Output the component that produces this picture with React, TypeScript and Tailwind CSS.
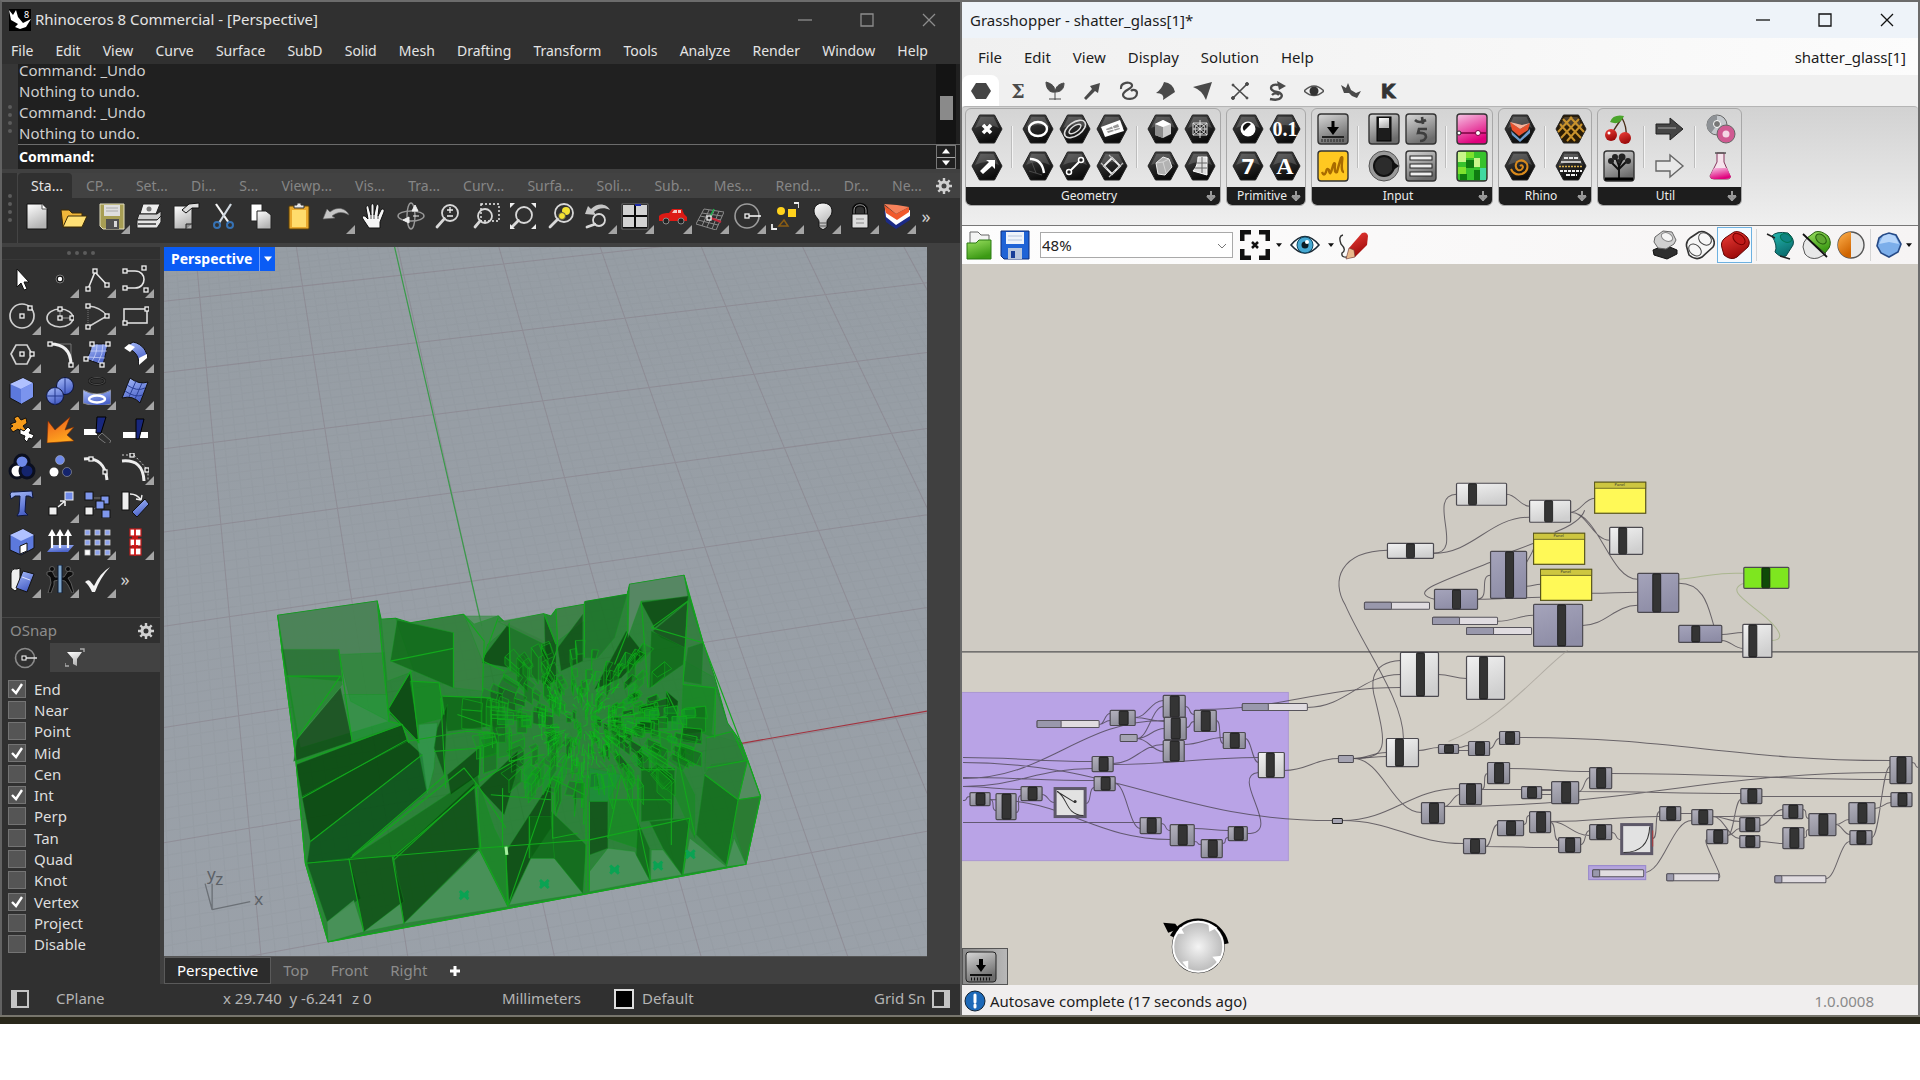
import type { ReactNode } from "react";

interface IconProps {
  label: string;
  fly?: boolean;
  children: ReactNode;
}

interface NodeSpec {
  x: number;
  y: number;
  w: number;
  h: number;
  bar: number;
  barW?: number;
  tone?: "light" | "dim" | "green";
}

const MENU = ["File", "Edit", "View", "Curve", "Surface", "SubD", "Solid", "Mesh", "Drafting", "Transform", "Tools", "Analyze", "Render", "Window", "Help"];
const TABS = ["CP...", "Set...", "Di...", "S...", "Viewp...", "Vis...", "Tra...", "Curv...", "Surfa...", "Soli...", "Sub...", "Mes...", "Rend...", "Dr...", "Ne..."];
const SNAPS: [string, boolean][] = [
  ["End", true], ["Near", false], ["Point", false], ["Mid", true], ["Cen", false], ["Int", true], ["Perp", false],
  ["Tan", false], ["Quad", false], ["Knot", false], ["Vertex", true], ["Project", false], ["Disable", false],
];

/* ---------- shared gradients ---------- */

function SharedDefs() {
  const grads: [string, string, string][] = [
    ["gBlue", "#a9bdfa", "#4a62c8"],
    ["gGray", "#ffffff", "#b4b4b4"],
    ["gDark", "#4a4a4a", "#0c0c0c"],
    ["gPlate", "#d8d8d8", "#6c6c6c"],
    ["gFire", "#e8571c", "#ffa61e"],
    ["gPink", "#f6c4e4", "#e0007c"],
    ["gLight", "#f2f2f2", "#cfcfcf"],
    ["gDim", "#b3b1bd", "#8f8f9b"],
    ["gPurple", "#a5a4bb", "#8e8da6"],
    ["gRed", "#f0403a", "#9c0a0a"],
    ["gTeal", "#25b8b0", "#0b6f70"],
    ["gOrange", "#ffb14d", "#cf6400"],
    ["gGreen", "#9be060", "#3c9a14"],
  ];
  return (
    <svg className="absolute size-0" aria-hidden="true">
      <defs>
        {grads.map(([id, a, b]) => (
          <linearGradient key={id} id={id} x1="0" y1="0" x2="0.4" y2="1">
            <stop offset="0" stopColor={a} />
            <stop offset="1" stopColor={b} />
          </linearGradient>
        ))}
        <radialGradient id="gKnob">
          <stop offset="0" stopColor="#f4f4f4" />
          <stop offset="1" stopColor="#b9b9b9" />
        </radialGradient>
        <linearGradient id="gGround" x1="0" y1="0" x2="0" y2="1">
          <stop offset="0" stopColor="#969da4" />
          <stop offset="1" stopColor="#9fa5ae" />
        </linearGradient>
      </defs>
    </svg>
  );
}

/* ---------- Rhino toolbars ---------- */

function Tool({ label, fly, children }: IconProps) {
  return (
    <button aria-label={label} className="relative flex min-w-0 flex-1 items-center justify-center">
      <svg viewBox="0 0 28 28" className="size-7 shrink-0" fill="none">
        {children}
      </svg>
      {fly && (
        <svg viewBox="0 0 8 8" className="absolute right-0 bottom-0 size-[9px]">
          <path d="M8 0V8H0Z" fill="#a4a4a4" />
        </svg>
      )}
    </button>
  );
}

const H = ({ x, y }: { x: number; y: number }) => (
  <rect x={x - 2} y={y - 2} width="4" height="4" fill="#2b2b2b" stroke="#f0f0f0" strokeWidth="1.3" />
);

const Lens = ({ cx = 16, cy = 11, r = 8 }) => (
  <g stroke="#d8d8d8">
    <circle cx={cx} cy={cy} r={r} strokeWidth="1.8" />
    <path d={`M${cx - r * 0.7} ${cy + r * 0.7}L3 25`} strokeWidth="2.8" strokeLinecap="round" />
  </g>
);

function MainToolbar() {
  return (
    <div className="flex min-w-0 flex-1">
      <Tool label="New">
        <path d="M4 2H19L24 7V27H4Z" fill="url(#gGray)" stroke="#111" />
        <path d="M19 2V7H24" stroke="#555" fill="#fff" />
      </Tool>
      <Tool label="Open">
        <path d="M1 8H9L12 11H22V25H3Z" fill="#f0b73a" stroke="#3a2a08" />
        <path d="M8 14H27L22 25H3Z" fill="#ffe075" stroke="#3a2a08" />
      </Tool>
      <Tool label="Save" fly>
        <path d="M2 2H26V27H5L2 24Z" fill="#a79e54" stroke="#e3dfc0" />
        <rect x="6" y="3" width="16" height="11" fill="#dedede" />
        <path d="M8 6H20M8 9H20" stroke="#aaa" />
        <rect x="8" y="17" width="13" height="10" fill="#505050" />
        <rect x="16" y="19" width="3" height="6" fill="#d8d8d8" />
      </Tool>
      <Tool label="Print">
        <path d="M8 2H25L21 12H5Z" fill="#eee" stroke="#222" />
        <path d="M4 12H22L26 9V14L22 18H2Z" fill="#cfcfcf" stroke="#222" />
        <path d="M2 18H22L26 14V20L22 26H2Z" fill="#e6e6e6" stroke="#222" />
        <path d="M3 22H21" stroke="#333" strokeWidth="1.5" />
        <circle cx="14" cy="7" r="2.5" fill="#777" />
      </Tool>
      <Tool label="Properties">
        <path d="M2 4H20V27H2Z" fill="url(#gGray)" stroke="#222" />
        <path d="M10 8L17 2L27 1V6H20L14 11Z" fill="#dcdcdc" stroke="#111" />
        <path d="M14 27V22H20" fill="#888" stroke="#222" />
      </Tool>
      <Tool label="Cut">
        <path d="M6 2L19 21" stroke="#f5f5f5" strokeWidth="2.2" />
        <path d="M21 2L9 21" stroke="#d0d8e0" strokeWidth="2.2" />
        <circle cx="7" cy="23" r="3" stroke="#3672b4" strokeWidth="2" />
        <circle cx="20" cy="23" r="3" stroke="#3672b4" strokeWidth="2" />
      </Tool>
      <Tool label="Copy">
        <path d="M4 2H15V19H4Z" fill="#fff" stroke="#222" />
        <path d="M10 9H19L24 13V27H10Z" fill="url(#gGray)" stroke="#222" />
      </Tool>
      <Tool label="Paste">
        <rect x="4" y="4" width="20" height="23" rx="1" fill="#e9a92d" stroke="#5c4007" />
        <rect x="7" y="8" width="14" height="17" fill="#ffdc6c" />
        <path d="M9 6V3H12V1H16V3H19V6Z" fill="#e8e8e8" stroke="#333" />
      </Tool>
      <Tool label="Undo" fly>
        <path d="M1 17L5 7L8 10C15 4 24 6 27 13C20 9 15 10 10 14L13 16Z" fill="#c6c6c6" stroke="#666" strokeWidth=".6" />
      </Tool>
      <Tool label="Pan">
        <path d="M9 26L3 17C1 14 4 13 6 15L8 17L6 6C6 3 9 3 9 6L11 13V4C11 1 14 1 14 4V13L16 4C17 1 19 2 19 5L18 14L21 8C22 6 25 7 24 10L20 20V26Z" fill="#f6f6f6" stroke="#111" />
        <path d="M11 13V17M14 13V17M18 14V17" stroke="#555" />
      </Tool>
      <Tool label="Rotate view">
        <ellipse cx="14" cy="14" rx="13" ry="5" stroke="#999" strokeWidth="1.4" />
        <ellipse cx="14" cy="14" rx="4" ry="13" stroke="#999" strokeWidth="1.4" />
        <path d="M6 18L12 15V21ZM18 3L21 9H15ZM16 14H22" fill="#eee" stroke="#eee" />
      </Tool>
      <Tool label="Zoom dynamic">
        <Lens />
        <path d="M13 8H19M16 5V11M13 14H19" stroke="#eee" strokeWidth="1.3" />
      </Tool>
      <Tool label="Zoom window">
        <rect x="9" y="2" width="18" height="17" stroke="#eee" strokeWidth="1.4" strokeDasharray="2 2" />
        <Lens cx={13} cy={14} r={7} />
      </Tool>
      <Tool label="Zoom extents">
        <Lens cx={15} cy={13} r={8} />
        <path d="M1 1H6L1 6ZM27 1V6L22 1ZM27 27H22L27 22ZM1 27V22L6 27Z" fill="#eee" />
      </Tool>
      <Tool label="Zoom selected">
        <Lens cx={17} cy={11} r={9} />
        <circle cx="19" cy="9" r="4" fill="#f3e233" />
        <circle cx="15" cy="14" r="3.5" fill="#f3e233" stroke="#554" />
      </Tool>
      <Tool label="Undo view" fly>
        <path d="M1 12L4 4L7 7C14 0 23 2 26 8C20 5 14 6 10 10L12 13Z" fill="#c6c6c6" />
        <Lens cx={15} cy={18} r={6} />
      </Tool>
      <Tool label="Four viewports" fly>
        <rect x="1" y="2" width="26" height="25" fill="#0a0a0a" stroke="#aaa" strokeWidth=".5" />
        <path d="M2 3H13V13H2ZM15 3H26V13H15ZM2 15H13V25H2ZM15 15H26V25H15Z" fill="#d2d2d2" />
        <path d="M14 2V4H20V2Z" fill="#1b2aa8" />
      </Tool>
      <Tool label="Car" fly>
        <path d="M0 14C3 11 7 11 10 11L13 7H23L25 12L28 15V19H0Z" fill="#dd1a14" />
        <path d="M13 11L15 8H18V11ZM19 8H22V11H19Z" fill="#f5c8c4" />
        <circle cx="7" cy="19" r="3" fill="#222" stroke="#888" />
        <circle cx="22" cy="19" r="3" fill="#222" stroke="#888" />
      </Tool>
      <Tool label="Set CPlane" fly>
        <path d="M8 7L28 10L20 28L0 22ZM4 14L25 18M6 11L26 14M2 18L22 23M13 8L6 24M18 9L11 25M23 9L16 27" stroke="#8b8b8b" />
        <path d="M14 15L18 7" stroke="#1fae4b" strokeWidth="1.6" />
        <path d="M15 16L25 20" stroke="#c4283a" strokeWidth="2" />
        <H x={13} y={16} />
      </Tool>
      <Tool label="Circle" fly>
        <circle cx="13" cy="14" r="12" stroke="#9c9c9c" strokeWidth="1.6" />
        <path d="M13 14H27" stroke="#fff" strokeWidth="1.5" />
        <H x={13} y={14} />
      </Tool>
      <Tool label="Select" fly>
        <circle cx="10" cy="9" r="4" fill="#ffd21c" />
        <rect x="17" y="7" width="8" height="8" fill="#ffd21c" />
        <path d="M13 18L17 24H8Z" stroke="#8a5d14" strokeWidth="1.5" />
        <path d="M23 1H28V6M1 22V27H6" stroke="#eee" strokeWidth="1.8" />
      </Tool>
      <Tool label="Hide" fly>
        <path d="M10 20C10 16 5 15 5 9C5 4 9 1 14 1C19 1 23 4 23 9C23 15 18 16 18 20V25L14 28L10 25Z" fill="url(#gGray)" stroke="#111" />
        <path d="M10 21H18M10 24H18" stroke="#555" />
      </Tool>
      <Tool label="Lock" fly>
        <path d="M8 13V8C8 1 20 1 20 8V13" stroke="#0a0a0a" strokeWidth="4" />
        <path d="M8 13V8C8 1 20 1 20 8V13" stroke="#999" strokeWidth="1" />
        <rect x="6" y="12" width="16" height="14" rx="1" fill="#dcdcdc" stroke="#111" />
        <path d="M10 17H18M10 21H18" stroke="#888" />
      </Tool>
      <Tool label="Layers" fly>
        <path d="M1 9L13 17L27 10V18L13 27L3 20Z" fill="#1b2a86" />
        <path d="M2 6L13 15L27 8V14L13 23L3 15Z" fill="#fff" />
        <path d="M1 3L13 12L26 5V10L14 18L3 11Z" fill="#f1592c" />
        <path d="M1 2L14 3L26 5L13 12Z" fill="#f7825b" />
      </Tool>
    </div>
  );
}

function SideTools() {
  return (
    <div className="ml-px grid h-[338px] w-[151px] grid-cols-4 grid-rows-9">
      <Tool label="Pointer"><path d="M9 4V22L13 18L16 25L19 24L16 17H21Z" fill="#fff" stroke="#111" /></Tool>
      <Tool label="Point" fly><circle cx="14" cy="14" r="4" fill="#111" stroke="#777" /><circle cx="14" cy="14" r="2.2" fill="#fff" /></Tool>
      <Tool label="Polyline" fly>
        <path d="M5 24L12 7L24 20" stroke="#e6e6e6" strokeWidth="1.6" /><H x={5} y={24} /><H x={12} y={6} /><H x={24} y={20} />
      </Tool>
      <Tool label="Curve" fly>
        <path d="M4 6H14C26 6 26 23 14 23H4" stroke="#e6e6e6" strokeWidth="1.6" /><H x={4} y={6} /><H x={4} y={23} /><H x={23} y={3} /><H x={25} y={25} />
      </Tool>
      <Tool label="Circle tool" fly>
        <circle cx="14" cy="14" r="12" stroke="#cfcfcf" strokeWidth="1.7" /><H x={14} y={14} /><H x={22} y={6} />
      </Tool>
      <Tool label="Ellipse" fly>
        <ellipse cx="14" cy="16" rx="13" ry="9" stroke="#cfcfcf" strokeWidth="1.7" /><path d="M14 7V16H26" stroke="#999" /><H x={14} y={16} /><H x={14} y={7} /><H x={26} y={16} />
      </Tool>
      <Tool label="Arc" fly>
        <path d="M5 4Q18 5 24 14L5 25" stroke="#cfcfcf" strokeWidth="1.5" /><path d="M5 4V25" stroke="#777" strokeDasharray="1 1" /><H x={5} y={4} /><H x={5} y={25} /><H x={24} y={14} />
      </Tool>
      <Tool label="Rectangle" fly>
        <rect x="3" y="7" width="23" height="14" stroke="#dcdcdc" strokeWidth="1.6" /><H x={26} y={7} /><H x={4} y={21} />
      </Tool>
      <Tool label="Polygon" fly>
        <path d="M3 14L8 5H19L24 14L19 24H8Z" stroke="#cfcfcf" strokeWidth="1.7" /><H x={14} y={14} /><H x={24} y={14} />
      </Tool>
      <Tool label="Fillet" fly>
        <path d="M3 4H25V25" stroke="#777" /><path d="M4 4C18 4 25 11 25 25" stroke="#f0f0f0" strokeWidth="3" /><H x={4} y={4} /><H x={25} y={25} />
      </Tool>
      <Tool label="Surface" fly>
        <path d="M8 4H25L20 25L3 19Q9 11 8 4Z" fill="url(#gBlue)" stroke="#111" /><path d="M14 4Q14 14 9 21M20 4Q20 14 15 23M7 11H24M5 17L22 18" stroke="#dfe5ff" strokeWidth=".6" /><H x={9} y={4} /><H x={25} y={4} /><H x={3} y={19} /><H x={19} y={25} />
      </Tool>
      <Tool label="Extrude" fly>
        <path d="M3 8L12 2C22 4 26 12 26 17L18 25C18 15 13 9 3 8Z" fill="url(#gBlue)" stroke="#111" /><path d="M3 8L8 4L14 7L9 12ZM18 25L18 18L26 14V18Z" fill="#fff" />
      </Tool>
      <Tool label="Box" fly>
        <path d="M2 7L15 1L25 6V20L13 27L2 21Z" fill="#5c79dc" stroke="#111" /><path d="M2 7L15 1L25 6L13 12Z" fill="#b0c1ff" /><path d="M13 12L25 6V20L13 27Z" fill="#7b94ee" />
      </Tool>
      <Tool label="Boolean union" fly>
        <circle cx="19" cy="9" r="8.5" fill="url(#gBlue)" stroke="#0a123c" /><circle cx="9" cy="19" r="8.5" fill="url(#gBlue)" stroke="#0a123c" /><path d="M9 10V28M0 19H18M19 1V17" stroke="#24398e" />
      </Tool>
      <Tool label="Project curve" fly>
        <ellipse cx="14" cy="4" rx="8" ry="3.5" stroke="#111" strokeWidth="2" /><ellipse cx="14" cy="4" rx="8" ry="3.5" stroke="#888" strokeWidth=".5" /><path d="M0 13Q14 21 28 13V27Q14 31 0 26Z" fill="url(#gBlue)" stroke="#888" /><ellipse cx="14" cy="22" rx="8" ry="3.5" stroke="#fff" strokeWidth="2.5" />
      </Tool>
      <Tool label="Patch" fly>
        <path d="M9 1Q18 8 27 5L19 26Q12 18 1 21Z" fill="url(#gBlue)" stroke="#111" /><path d="M6 8Q16 15 24 11M4 14Q14 21 22 18M15 4L8 20M21 6L14 22" stroke="#2a3f94" />
      </Tool>
      <Tool label="Puzzle" fly>
        <path d="M2 9L8 7L6 3L10 1L13 5L18 3L19 8L15 11L18 15L13 17L10 14L5 17L2 13L5 11Z" fill="#f59b1b" stroke="#111" />
        <path d="M12 14L16 16L20 12L23 15L21 18L26 20L24 24L21 23L19 27L16 24L17 21L12 19Z" fill="#fff" stroke="#111" />
      </Tool>
      <Tool label="Explode"><path d="M1 28L2 6L9 15L24 2L19 15L28 12L21 20L28 26Z" fill="url(#gFire)" stroke="#7c2c04" strokeWidth=".6" /></Tool>
      <Tool label="Trim"><path d="M1 14H14V20H1Z" fill="#fff" /><path d="M14 2H23L18 18H13Z" fill="#18277d" stroke="#000" /><path d="M15 22L19 18L28 26L25 30L17 24Z" stroke="#777" /></Tool>
      <Tool label="Split"><path d="M2 17H27V23H2Z" fill="#fff" /><path d="M15 4H23L18 24H15Z" fill="#18277d" stroke="#000" /></Tool>
      <Tool label="Group" fly>
        <circle cx="14" cy="9" r="7" fill="#6f8ae8" stroke="#0b0f1e" strokeWidth="3" /><circle cx="9" cy="18" r="7" fill="#fff" stroke="#0b0f1e" strokeWidth="3" /><circle cx="19" cy="18" r="7" fill="#14246c" stroke="#0b0f1e" strokeWidth="3" /><circle cx="14" cy="9" r="5" fill="#6f8ae8" />
      </Tool>
      <Tool label="Ungroup">
        <circle cx="14" cy="7" r="4.5" fill="#6f8ae8" stroke="#bbb" strokeWidth=".5" /><circle cx="8" cy="19" r="4.5" fill="#fff" /><circle cx="21" cy="19" r="4.5" fill="#14246c" stroke="#bbb" strokeWidth=".5" />
      </Tool>
      <Tool label="Edit points"><path d="M1 6Q22 4 24 27" stroke="#eee" strokeWidth="3" /><H x={8} y={6} /><H x={22} y={19} /></Tool>
      <Tool label="Control points" fly><path d="M1 8Q22 6 23 28" stroke="#eee" strokeWidth="3" /><path d="M1 2H13L27 17V27" stroke="#ccc" strokeDasharray="2 2" /><H x={11} y={2} /><H x={26} y={17} /></Tool>
      <Tool label="Text"><path d="M2 4Q3 1 6 2L24 1L25 8L21 6H18L17 22L20 25L9 26L11 22L12 6H7L3 9Z" fill="url(#gBlue)" stroke="#0d1740" /></Tool>
      <Tool label="Move" fly>
        <path d="M12 17L19 11M19 11H14M19 11V16" stroke="#eee" strokeWidth="1.6" /><rect x="3" y="17" width="8" height="8" fill="#eee" stroke="#111" /><rect x="19" y="2" width="8" height="8" fill="#6f8ae8" stroke="#eee" />
      </Tool>
      <Tool label="Copy objects">
        <path d="M11 8L20 8M11 19L19 14" stroke="#777" /><g fill="#7f97ec" stroke="#111"><rect x="2" y="2" width="8" height="8" /><rect x="18" y="6" width="8" height="8" /><rect x="13" y="11" width="8" height="8" /><rect x="19" y="20" width="8" height="8" /></g><rect x="2" y="17" width="8" height="8" fill="#eee" stroke="#111" />
      </Tool>
      <Tool label="Rotate"><rect x="1" y="2" width="7" height="18" fill="#eee" stroke="#111" /><path d="M9 4Q16 4 20 10M20 10L15 9M20 10L21 5" stroke="#eee" strokeWidth="1.4" /><path d="M11 22L24 9L28 14L16 27Z" fill="url(#gBlue)" stroke="#111" /></Tool>
      <Tool label="Solid edit" fly>
        <path d="M2 7L15 1L26 7V20L13 27L2 22Z" fill="#5c79dc" stroke="#111" /><path d="M2 7L15 1L26 7L13 13Z" fill="#b0c1ff" /><path d="M12 18L19 15V23L12 26Z" fill="#fff" stroke="#111" />
      </Tool>
      <Tool label="Extrude up" fly>
        <path d="M7 17H28L22 24H1Z" fill="url(#gBlue)" /><path d="M6 20V5M14 20V5M22 20V5" stroke="#fff" strokeWidth="2.2" /><path d="M6 1L10 8H2ZM14 1L18 8H10ZM22 1L26 8H18Z" fill="#fff" />
      </Tool>
      <Tool label="Array" fly>
        {[2, 12, 22].map((y) => [2, 12, 22].map((x) => (
          <rect key={`${x}-${y}`} x={x} y={y} width="5" height="5" fill={y === 22 && x === 2 ? "#fff" : "#8ea3ee"} stroke="#ccc" strokeWidth=".8" />
        )))}
      </Tool>
      <Tool label="Flow" fly>
        {[1, 11, 20].map((y) => <rect key={y} x="9" y={y} width="11" height="7" fill="#fff" stroke="#c71b1b" strokeWidth="1.2" />)}
        <path d="M14 1V28M12 8V11M16 8V11M12 17V20M16 17V20" stroke="#d01414" strokeWidth="1.8" />
      </Tool>
      <Tool label="Books" fly>
        <path d="M3 8Q4 3 9 4L12 3V22L7 26L3 23Z" fill="#eee" stroke="#111" /><path d="M15 6L26 9L19 27L8 23Z" fill="url(#gBlue)" stroke="#111" /><path d="M14 12L22 15" stroke="#dfe5ff" />
      </Tool>
      <Tool label="Mirror people" fly>
        <g fill="#0c0c0c" stroke="#6a6a6a" strokeWidth=".8">
          <path d="M1 7L6 6L9 12H13V15L8 16V20L5 28H2L5 18L4 12L1 10ZM27 7L22 6L18 12H14V15L19 16L22 20L26 28H28L25 18L22 13L27 10Z" />
          <circle cx="6" cy="4" r="2.5" />
          <circle cx="22" cy="4" r="2.5" />
        </g>
        <rect x="12" y="0" width="4" height="28" fill="#7fa6cc" stroke="#0d1a33" />
      </Tool>
      <Tool label="Check" fly><path d="M2 17Q5 14 7 16L11 21Q17 8 27 2Q17 13 12 27H9Q6 20 2 17Z" fill="#f2f2f2" /></Tool>
      <button aria-label="More tools" className="pr-5 text-lg leading-none text-[#d0d0d0]">»</button>
    </div>
  );
}

const Gear = () => (
  <svg viewBox="0 0 16 16" className="size-4" fill="none">
    <circle cx="8" cy="8" r="4" stroke="#d0d0d0" strokeWidth="3" />
    <path d="M8 0V3M8 13V16M0 8H3M13 8H16M2.3 2.3L4.5 4.5M11.5 11.5L13.7 13.7M2.3 13.7L4.5 11.5M11.5 4.5L13.7 2.3" stroke="#d0d0d0" strokeWidth="2.4" />
  </svg>
);

const GripDots = ({ vertical }: { vertical?: boolean }) => (
  <div className={vertical ? "flex flex-col gap-1" : "flex gap-1"}>
    {[0, 1, 2, 3].map((i) => (
      <span key={i} className="size-1 rounded-full bg-[#5c5c5c]" />
    ))}
  </div>
);

function WindowButtons({ dark }: { dark?: boolean }) {
  const stroke = dark ? "#8d8d8d" : "#111";
  const shapes: [string, string][] = [
    ["Minimize", "M0 7H14"],
    ["Maximize", "M1 1H13V13H1Z"],
    ["Close", "M1 1L13 13M13 1L1 13"],
  ];
  return (
    <div className="ml-auto flex gap-12 pr-6">
      {shapes.map(([label, d]) => (
        <button key={label} aria-label={label}>
          <svg viewBox="0 0 14 14" className="size-3.5"><path d={d} fill="none" stroke={stroke} strokeWidth="1.3" /></svg>
        </button>
      ))}
    </div>
  );
}

/* ---------- Rhino viewport ---------- */

const ROWS = [180, 240, 301, 372, 448, 531, 625, 726, 841, 970, 1110];

function GroundGrid() {
  const major: string[] = [];
  const minor: string[] = [];
  const row = (y: number) => {
    const s = 0.076 + 0.000112 * y;
    return `M160 ${y + s * 5}L930 ${y - s * 765}`;
  };
  const col = (k: number) => {
    const x = 397 + 101 * k;
    return `M${x} 247L${x + (0.221 + 0.064 * k) * 712} 959`;
  };
  ROWS.forEach((y, i) => {
    major.push(row(y));
    const next = ROWS[i + 1];
    if (next) for (let j = 1; j < 10; j++) minor.push(row(y + ((next - y) * j) / 10));
  });
  for (let k = -4; k <= 6; k++) {
    major.push(col(k));
    for (let j = 1; j < 10; j++) minor.push(col(k + j / 10));
  }
  return (
    <>
      <path d={minor.join("")} stroke="#868c94" strokeOpacity=".17" fill="none" />
      <path d={major.join("")} stroke="#847a84" strokeOpacity=".48" fill="none" />
    </>
  );
}

const D = "#07400c";
const M = "#0c6614";
const G = "#128a1e";
const L = "#4f9560";

const SHARDS: [string, string, number][] = [
  ["52,163 350,120 385,480 120,560", "#5c8468", 0.75],
  ["62,265 235,265 245,360 80,345", M, 0.5],
  ["235,280 372,275 385,480 270,420", G, 0.45],
  ["80,345 240,345 245,370 110,530", G, 0.6],
  ["240,380 275,540 100,600 110,535", D, 0.75],
  ["250,400 380,400 385,480 420,490 275,540", "#18a336", 0.45],
  ["362,175 405,172 460,330 380,360", "#3c8a48", 0.7],
  ["410,178 578,215 578,380 390,300", M, 0.8],
  ["450,185 608,160 670,240 665,390 580,380 578,215", "#3f8148", 0.7],
  ["385,440 448,335 475,545 390,460", D, 0.9],
  ["448,360 535,365 550,470 470,490", G, 0.8],
  ["545,405 690,410 690,495 560,510", M, 0.9],
  ["612,165 712,165 740,200 680,250 665,300", "#3e8a49", 0.8],
  ["670,285 745,185 745,320 665,305", D, 0.8],
  ["745,190 850,240 850,360 750,330", "#1c7226", 0.8],
  ["712,182 848,158 880,240 850,250", "#47824f", 0.7],
  ["850,165 885,250 885,360 855,370", D, 0.7],
  ["885,145 970,130 970,180 890,240", "#4b8253", 0.7],
  ["890,260 965,160 965,300 900,330", D, 0.7],
  ["970,122 1098,100 1060,230 1010,290 970,290", "#1c7028", 0.7],
  ["1000,385 1095,210 1150,280 1080,350", D, 0.8],
  ["1105,70 1268,43 1280,110 1140,120 1100,230", "#688a74", 0.8],
  ["1140,125 1280,105 1280,120 1180,200", D, 0.8],
  ["1175,210 1278,125 1270,260 1200,230", "#16501c", 0.9],
  ["1170,210 1270,260 1265,310 1165,380", M, 0.8],
  ["1280,110 1325,245 1360,350 1270,300", "#3d7d49", 0.7],
  ["1280,260 1325,245 1320,370 1265,360", "#187224", 0.8],
  ["1265,370 1362,380 1360,530 1260,490", G, 0.7],
  ["1362,380 1398,485 1440,545 1350,520", "#3d8549", 0.6],
  ["1215,390 1250,420 1245,480 1215,480", D, 0.9],
  ["107,610 425,490 440,540 125,705", D, 0.85],
  ["125,705 440,540 485,580 150,840", D, 0.9],
  ["150,840 485,580 500,690 270,890 140,905", "#0a4a18", 0.85],
  ["270,890 650,640 655,670 400,885", M, 0.7],
  ["400,885 640,665 655,860 430,1085", D, 0.75],
  ["140,905 265,890 300,1010 200,1080", "#0d4f1a", 0.8],
  ["265,890 395,885 430,1020 310,1110", D, 0.7],
  ["200,1080 280,1015 310,1110 203,1140", L, 0.9],
  ["310,1110 420,1025 430,1085", L, 0.9],
  ["430,1085 655,865 740,1035", L, 0.9],
  ["655,670 700,800 735,870 740,1030 655,865", G, 0.6],
  ["560,640 655,560 655,640 570,700", D, 0.8],
  ["655,680 770,570 765,640 730,760", D, 0.8],
  ["735,870 870,660 870,800 810,890 745,1025", D, 0.8],
  ["810,890 880,890 965,995 745,1030", L, 0.95],
  ["870,750 975,850 965,995 880,890", M, 0.8],
  ["805,765 870,765 880,890 810,890", M, 0.8],
  ["985,930 1040,860 1120,870 1165,955 985,990", L, 0.95],
  ["985,720 1040,720 1040,860 985,880", D, 0.7],
  ["1045,715 1135,715 1130,860 1040,830", G, 0.7],
  ["1130,780 1165,860 1165,955 1125,880", M, 0.8],
  ["1170,865 1205,865 1262,940 1168,955", L, 0.9],
  ["1165,780 1285,770 1262,940 1205,860", M, 0.8],
  ["1285,830 1395,915 1265,938", L, 0.95],
  ["1140,620 1240,620 1235,770 1140,780", M, 0.8],
  ["1250,600 1300,700 1300,830 1240,700", G, 0.6],
  ["1335,530 1410,510 1450,595 1330,630", "#2f7d3b", 0.7],
  ["1330,640 1430,715 1395,910 1305,820", M, 0.7],
  ["1350,610 1458,597 1430,715 1330,640", "#2a7a36", 0.7],
  ["1458,597 1497,705 1430,715", "#5f8f6a", 0.9],
  ["1430,715 1497,705 1453,908 1418,800 1395,915", "#2b7a30", 0.8],
  ["1418,830 1453,908 1395,915", L, 0.9],
  ["475,490 530,485 520,620 500,700 470,550", "#37a458", 0.6],
  ["530,500 560,430 550,640 520,560", D, 0.7],
  ["985,620 1080,640 1040,720 985,720", "#12983a", 0.6],
];

const EDGES = [
  "52,163 105,580 135,905 203,1140 1453,908 1497,705 1458,595 1325,245 1268,43",
  "350,120 385,480 425,490 445,545",
  "235,265 275,540", "80,345 240,345 108,535", "107,605 425,490", "125,710 440,535", "150,840 485,580",
  "135,905 655,860 985,835 1285,770", "265,890 310,1110", "395,885 430,1085", "655,860 740,1030",
  "270,890 610,620 650,670 400,885", "275,882 555,640", "400,895 640,675", "645,665 660,860",
  "735,870 740,1035 870,660", "805,765 805,890", "875,700 875,830 950,815", "975,700 975,990", "985,720 985,985",
  "1045,715 1230,715 1230,850", "1130,640 1130,780 1168,955", "1285,770 1265,938", "1430,715 1395,912",
  "1250,590 1300,820", "1100,90 1100,210 1060,310", "1140,120 1160,380", "1170,200 1280,120 1265,370",
  "970,125 970,290", "885,145 890,260 850,370", "850,160 885,250", "745,185 748,330", "712,170 665,300 730,330",
  "608,160 670,240 665,390", "578,215 578,380", "390,300 578,262", "385,440 450,330 475,545 385,450",
  "450,360 535,365 550,460", "545,405 690,410 695,560", "690,460 815,465", "590,460 690,495",
  "440,540 620,510 730,520", "520,570 660,560 655,650", "655,660 830,560", "1265,370 1362,380 1360,530",
  "1215,390 1265,495 1250,590", "1335,530 1415,510 1450,595", "1170,200 1325,245", "1330,640 1430,715 1497,705",
  "1335,620 1458,597 1430,715", "1140,560 1240,625 1135,625", "1080,640 1130,780", "1080,640 1040,830", "540,410 555,680",
  "745,500 745,600 850,580", "690,700 870,715", "725,680 725,860", "650,670 735,800", "870,650 970,700",
];

// small congruential generator keeps the shards the same on every paint
function makeRandom(start: number) {
  let seed = start;
  return () => {
    seed = (seed * 16807) % 2147483647;
    return seed / 2147483647;
  };
}

interface Prism {
  y: number;
  wall: string;
  top: string;
  fill: string;
}

// glass splinters: a slanted top face over a wall, smaller towards the impact point
function buildPrisms() {
  const rnd = makeRandom(41);
  const list: Prism[] = [];
  for (let i = 0; i < 210; i++) {
    const a = rnd() * Math.PI * 2;
    const r = 12 + Math.pow(rnd(), 0.85) * 250;
    const x = 975 + Math.cos(a) * r * 1.2;
    const y = 470 + Math.sin(a) * r * 0.8;
    const size = 9 + r * 0.17 * (0.5 + rnd());
    const drop = 14 + r * 0.3 * rnd();
    const dx = Math.cos(a) * size;
    const dy = Math.sin(a) * size * 0.8;
    const nx = -Math.sin(a) * size * 0.4;
    const ny = Math.cos(a) * size * 0.4;
    const p = (px: number, py: number) => `${Math.round(px)},${Math.round(py)}`;
    list.push({
      y,
      wall: [p(x, y), p(x + dx, y + dy), p(x + dx, y + dy + drop), p(x, y + drop)].join(" "),
      top: [p(x, y), p(x + dx, y + dy), p(x + dx + nx * 1.4, y + dy + ny * 1.4), p(x + nx, y + ny)].join(" "),
      fill: [D, M, G, "#129a2c"][Math.floor(rnd() * 4)],
    });
  }
  return list.sort((m, n) => m.y - n.y);
}

const PRISMS = buildPrisms();

function coreLines() {
  const rnd = makeRandom(7);
  let d = "";
  for (let i = 0; i < 120; i++) {
    const a = rnd() * Math.PI * 2;
    const r = Math.sqrt(rnd()) * 120;
    const x = 965 + Math.cos(a) * r * 1.1;
    const y = 490 + Math.sin(a) * r;
    const len = 16 + 24 * rnd();
    const t = rnd() < 0.4 ? Math.PI / 2 : a + rnd() - 0.5;
    d += `M${x.toFixed(0)} ${y.toFixed(0)}l${(Math.cos(t) * len).toFixed(0)} ${(Math.sin(t) * len).toFixed(0)}l${(rnd() * 24 - 12).toFixed(0)} ${(rnd() * 20 - 6).toFixed(0)}`;
  }
  return d;
}

function Model() {
  return (
    <g transform="translate(260 560) scale(.33333)" strokeLinejoin="round">
      <polygon
        points="52,163 350,120 362,175 405,172 450,185 608,160 640,190 712,165 730,182 848,158 870,165 885,145 970,130 972,122 1098,100 1105,70 1268,43 1280,90 1325,245 1360,350 1398,485 1440,545 1458,595 1497,705 1453,908 203,1140 135,905 105,580"
        fill="#0f7a1c"
        fillOpacity=".78"
        stroke="#0c9c18"
        strokeWidth="3"
      />
      {SHARDS.map(([points, fill, opacity]) => (
        <polygon key={points} points={points} fill={fill} fillOpacity={opacity * 0.88} stroke="#0f9a1a" strokeOpacity=".5" strokeWidth="2" />
      ))}
      {PRISMS.map((s, i) => (
        <g key={i} fill={s.fill} stroke="#0fae1b" strokeWidth="2.4" strokeOpacity=".8">
          <polygon points={s.wall} fillOpacity=".42" />
          <polygon points={s.top} fillOpacity=".2" />
        </g>
      ))}
      {EDGES.map((points) => (
        <polyline key={points} points={points} fill="none" stroke="#12a81c" strokeWidth="3.4" />
      ))}
      <path d={coreLines()} fill="none" stroke="#0cc01a" strokeWidth="2.6" strokeOpacity=".8" />
      <path d="M735 855L738 880" stroke="#a6f0a0" strokeWidth="9" />
      <g stroke="#0aa353" strokeWidth="9">
        {["610 1000", "850 967", "1060 924", "1190 912", "1287 878"].map((p) => (
          <path key={p} d={`M${p}m-13 -12l26 24m0 -24l-26 24m0 -12h26`} />
        ))}
      </g>
    </g>
  );
}

function Viewport() {
  return (
    <div className="relative min-h-0 flex-1">
      <svg viewBox="164 247 761 710" preserveAspectRatio="xMinYMin slice" className="absolute inset-0 h-full w-full">
        <rect x="164" y="247" width="1800" height="1500" fill="url(#gGround)" />
        <GroundGrid />
        <path d="M394 247L481 625" stroke="#3a9a4a" strokeWidth="1.2" />
        <path d="M740 742L930 709" stroke="#a2333f" strokeWidth="1.2" />
        <Model />
        <path d="M205 882L212 908V882M212 908L250 900" fill="none" stroke="#6b7076" strokeWidth="1.3" />
        <g fill="#5c6167" fontSize="17">
          <text x="207" y="878">y</text>
          <text x="215" y="883">z</text>
          <text x="254" y="903">x</text>
        </g>
      </svg>
      <div className="absolute top-0 left-0 flex h-6 bg-[#0a5cf5] text-sm font-bold text-white">
        <button className="px-[7px]">Perspective</button>
        <button aria-label="Viewport menu" className="flex w-4 items-center justify-center border-l border-[#6fa0ff]">
          <svg viewBox="0 0 8 5" className="h-1.5 w-2"><path d="M0 0H8L4 5Z" fill="#fff" /></svg>
        </button>
      </div>
    </div>
  );
}

function SnapPanel() {
  return (
    <section className="bg-[#303030]">
      <header className="flex h-[26px] items-center justify-between border-t border-[#444] pr-[6px] pl-2 text-[#8c8c8c]">
        OSnap
        <button aria-label="OSnap settings"><Gear /></button>
      </header>
      <div className="flex h-[29px] bg-[#424242]">
        <button aria-label="Snaps" className="flex w-12 items-center justify-center bg-[#303030]">
          <svg viewBox="0 0 24 22" className="h-[22px] w-6" fill="none">
            <circle cx="11" cy="11" r="9.5" stroke="#8a8a8a" strokeWidth="1.6" />
            <path d="M10 11H23" stroke="#ddd" strokeWidth="1.5" />
            <rect x="8" y="9" width="4" height="4" fill="#222" stroke="#fff" />
          </svg>
        </button>
        <button aria-label="Filters" className="flex w-[50px] items-center justify-center">
          <svg viewBox="0 0 20 20" className="size-5" fill="none">
            <path d="M2 4H17L12 11V18L8 16V11Z" fill="url(#gGray)" />
            <path d="M15 1H19V4M0 15V18H4" stroke="#aaa" strokeWidth="1.4" />
          </svg>
        </button>
      </div>
      <div className="mt-1.5 grid h-[277px] auto-rows-fr pl-1.5">
        {SNAPS.map(([name, on]) => (
          <label key={name} className="flex items-center gap-2 leading-5 text-[#dedede]">
            <span className="relative flex size-[18px]">
              <input type="checkbox" defaultChecked={on} className="peer size-[18px] appearance-none border border-[#747474] bg-[#555]" />
              <svg viewBox="0 0 18 18" className="pointer-events-none absolute inset-0 hidden size-[18px] peer-checked:block">
                <path d="M4 9L8 13L14 4" fill="none" stroke="#fff" strokeWidth="2.4" />
              </svg>
            </span>
            {name}
          </label>
        ))}
      </div>
    </section>
  );
}

function RhinoWindow() {
  return (
    <section className="flex w-1/2 flex-col border-t-2 border-l-2 border-t-[#6c6c6c] border-l-[#626262] bg-[#404040] text-[15px] text-[#e4e4e4]">
      <header className="flex h-[35px] items-center gap-1 bg-[#303030] pl-[7px]">
        <svg viewBox="0 0 22 22" className="size-[22px]">
          <rect width="22" height="22" fill="#000" />
          <path d="M0 1L4 6L7 1L9 8L14 14L22 10L17 18L11 20L6 18L9 15L2 11Z" fill="#fff" />
          <text x="15" y="9" fontSize="9" fill="#fff">8</text>
        </svg>
        <h1>Rhinoceros 8 Commercial - [Perspective]</h1>
        <WindowButtons dark />
      </header>
      <nav className="flex h-[27px] items-center justify-between bg-[#303030] pr-8 pl-[9px] text-sm">
        {MENU.map((m) => (
          <button key={m}>{m}</button>
        ))}
      </nav>
      <div className="flex bg-[#363636]">
        <div className="flex w-4 shrink-0 items-end justify-center pb-9"><GripDots vertical /></div>
        <div className="min-w-0 flex-1 bg-[#202020]">
          <div className="flex h-[81px] border-b border-[#6c6c6c]">
            <div className="flex flex-1 flex-col justify-end overflow-hidden pl-px leading-[21px] text-[#cfcfcf]">
              {["Command: _Undo", "Nothing to undo.", "Command: _Undo", "Nothing to undo."].map((t, i) => (
                <p key={i}>{t}</p>
              ))}
            </div>
            <div className="mr-1 w-5 bg-[#141414] pt-8 pl-1"><div className="h-6 w-[13px] bg-[#8a8a8a]" /></div>
          </div>
          <div className="flex h-6 pl-px">
            <label htmlFor="cmd" className="text-sm leading-6 font-bold text-white">Command:</label>
            <input id="cmd" className="min-w-0 flex-1 bg-transparent px-1 outline-none" />
            <div className="mr-1 flex w-5 flex-col border border-[#777]">
              <button aria-label="Previous" className="flex flex-1 items-center justify-center border-b border-[#aaa]"><svg viewBox="0 0 8 5" className="h-1.5 w-2"><path d="M4 0L8 5H0Z" fill="#fff" /></svg></button>
              <button aria-label="Next" className="flex flex-1 items-center justify-center"><svg viewBox="0 0 8 5" className="h-1.5 w-2"><path d="M0 0H8L4 5Z" fill="#fff" /></svg></button>
            </div>
          </div>
        </div>
      </div>
      <div className="mt-1 flex bg-[#303030]">
        <div className="flex w-4 shrink-0 items-center justify-center border-r border-[#444]"><GripDots vertical /></div>
        <div className="min-w-0 flex-1">
          <div className="flex h-[25px] bg-[#424242] text-sm text-[#868686]">
            <button className="w-[54px] rounded-t bg-[#303030] pl-1 text-[#e4e4e4]">Sta...</button>
            <div className="flex flex-1 items-center justify-between px-3.5">
              {TABS.map((t) => (
                <button key={t}>{t}</button>
              ))}
            </div>
            <button aria-label="Toolbar settings" className="mr-2"><Gear /></button>
          </div>
          <div className="flex h-[45px] pb-[9px]">
            <MainToolbar />
            <button aria-label="More" className="w-11 pr-6 text-lg leading-none text-[#d0d0d0]">»</button>
          </div>
        </div>
      </div>
      <div className="mt-1 flex min-h-0 flex-1">
        <aside className="w-[158px] shrink-0 bg-[#303030]">
          <div className="flex h-[13px] items-center justify-center border-b border-[#393939]"><GripDots /></div>
          <SideTools />
          <div className="h-[19px]" />
          <SnapPanel />
        </aside>
        <div className="flex min-w-0 flex-1 flex-col pr-[33px] pl-1">
          <Viewport />
          <div className="flex h-7 items-center gap-[22px] border-t border-[#555] text-[#8c8c8c]">
            <button className="-mr-2.5 h-full border border-[#5a5a5a] bg-[#2c2c2c] px-3 text-white">Perspective</button>
            <button>Top</button>
            <button>Front</button>
            <button>Right</button>
            <button aria-label="New viewport">
              <svg viewBox="0 0 12 12" className="size-3"><path d="M6 1V11M1 6H11" stroke="#fff" strokeWidth="3" /></svg>
            </button>
          </div>
        </div>
      </div>
      <footer className="flex h-[31px] items-center bg-[#303030] pr-2.5 pb-0.5 pl-[9px] text-[#b4b4b4]">
        <button aria-label="Left panel" className="h-[18px] w-[18px] border-2 border-l-[6px] border-[#c4c4c4]" />
        <span className="w-[178px] pl-[27px]">CPlane</span>
        <span className="flex-1 whitespace-pre pl-4">x 29.740  y -6.241  z 0</span>
        <span className="w-28">Millimeters</span>
        <span className="mr-2 size-5 border-2 border-[#ddd] bg-black" />
        <span className="w-[232px]">Default</span>
        <span className="w-14 whitespace-nowrap">Grid Sn</span>
        <button aria-label="Right panel" className="ml-0.5 h-[18px] w-[18px] border-2 border-r-[6px] border-[#c4c4c4]" />
      </footer>
    </section>
  );
}

/* ---------- Grasshopper ribbon ---------- */

function Hex({ label, fill = "url(#gDark)", children }: { label: string; fill?: string; children: ReactNode }) {
  return (
    <button aria-label={label} className="flex h-[37px] w-[37px] items-center justify-center">
      <svg viewBox="0 0 32 30" className="h-[30px] w-8" fill="none">
        <path d="M8.500 1H23.500L31 15L23.500 29H8.500L1 15Z" fill={fill} stroke="#222" />
        <path d="M9.500 3H22.500L28 14Q16 8 4 14Z" fill="#fff" fillOpacity=".16" />
        {children}
      </svg>
    </button>
  );
}

function Plate({ label, fill = "url(#gPlate)", children }: { label: string; fill?: string; children: ReactNode }) {
  return (
    <button aria-label={label} className="flex h-[37px] w-[37px] items-center justify-center">
      <svg viewBox="0 0 32 32" className="size-8" fill="none">
        <rect x="1" y="1" width="30" height="30" rx="3" fill={fill} stroke="#333" strokeWidth="1.4" />
        {children}
      </svg>
    </button>
  );
}

function Free({ label, children }: { label: string; children: ReactNode }) {
  return (
    <button aria-label={label} className="flex h-[37px] w-[37px] items-center justify-center">
      <svg viewBox="0 0 32 32" className="size-8" fill="none">{children}</svg>
    </button>
  );
}

function RibbonGroup({ title, children }: { title: string; children: ReactNode }) {
  return (
    <section className="flex flex-col overflow-hidden rounded-md border border-[#a8a8a8] bg-linear-to-b from-[#d4d4d4] to-[#ececec]">
      <div className="flex px-0.5 pt-px pb-[3px]">{children}</div>
      <footer className="relative flex h-[18px] items-center justify-center bg-[#1d1d1d] pr-2 text-xs text-[#ececec]">
        {title}
        <svg viewBox="0 0 10 10" className="absolute top-1 right-1 size-2.5"><path d="M5 0V10M1 5L5 9L9 5M1 5H9" stroke="#999" strokeWidth="2" fill="none" /></svg>
      </footer>
    </section>
  );
}

const Col = ({ children }: { children: ReactNode }) => <div className="flex flex-col">{children}</div>;
const Sep = () => <div className="mx-[6px] my-4 w-0.5 border-r border-[#f4f4f4] bg-[#bdbdbd]" />;

function Ribbon() {
  return (
    <div className="flex h-[119px] items-start gap-[5px] rounded-t border-t border-[#b5b5b5] bg-linear-to-b from-[#d2d2d2] to-[#efefef] pt-px pl-[3px]">
      <RibbonGroup title="Geometry">
        <Col>
          <Hex label="Point"><path d="M12 11L20 19M20 11L12 19" stroke="#fff" strokeWidth="3.6" /></Hex>
          <Hex label="Vector"><path d="M9 20L18 11L15 9H24V18L21 15L12 23Z" fill="#fff" /></Hex>
        </Col>
        <Sep />
        <Col>
          <Hex label="Circle"><ellipse cx="16" cy="15" rx="9" ry="7" stroke="#fff" strokeWidth="2.4" /></Hex>
          <Hex label="Circular arc"><path d="M8 8Q20 8 22 22" stroke="#fff" strokeWidth="2.4" /><path d="M9 9L14 22M7 20L20 24" stroke="#666" strokeWidth=".6" /></Hex>
        </Col>
        <Col>
          <Hex label="Curve"><ellipse cx="16" cy="15" rx="12" ry="6.500" transform="rotate(-35 16 15)" stroke="#ddd" strokeWidth="1.6" /><ellipse cx="16" cy="15" rx="7" ry="3" transform="rotate(-35 16 15)" stroke="#ddd" strokeWidth="1.4" /></Hex>
          <Hex label="Line"><path d="M10 21L22 9" stroke="#fff" strokeWidth="2" /><circle cx="10" cy="21" r="2.500" stroke="#fff" fill="#222" strokeWidth="1.5" /><circle cx="22" cy="9" r="2.500" stroke="#fff" fill="#222" strokeWidth="1.5" /></Hex>
        </Col>
        <Col>
          <Hex label="Plane"><path d="M5 13L24 6L28 17L9 23Z" fill="#fff" /><path d="M10 15L22 10L24 15L12 19Z" fill="#999" /><path d="M16 11L19 19M10 17L25 13" stroke="#fff" /></Hex>
          <Hex label="Rectangle"><path d="M16 7L24 15L16 23L8 15Z" stroke="#eee" strokeWidth="2" /><path d="M13 4L19 10M13 26L19 20M5 12L11 18M21 18L27 12" stroke="#bbb" strokeWidth="1.2" /></Hex>
        </Col>
        <Sep />
        <Col>
          <Hex label="Box"><path d="M8 10L16 6L24 10V20L16 24L8 21Z" fill="#ccc" /><path d="M8 10L16 13V24L8 21Z" fill="#8d8d8d" /><path d="M8 10L16 6L24 10L16 13Z" fill="#fff" /></Hex>
          <Hex label="Brep"><path d="M9 12L16 6L22 8L25 16L18 24L11 23Z" fill="#b2b2b2" stroke="#eee" /><path d="M9 12L16 11L22 8M16 11L19 22" stroke="#ddd" strokeWidth=".8" /></Hex>
        </Col>
        <Col>
          <Hex label="Mesh"><path d="M9 9H23V21H9ZM9 15H23M16 6V24M9 9L23 21M23 9L9 21" stroke="#ddd" /><circle cx="16" cy="15" r="5" stroke="#ddd" /></Hex>
          <Hex label="Surface"><path d="M14 6H23V24L9 20Q14 15 14 6Z" fill="#ddd" stroke="#fff" /><path d="M18 6V22M13 12H23M11 17H23" stroke="#666" /></Hex>
        </Col>
      </RibbonGroup>
      <RibbonGroup title="Primitive">
        <Col>
          <Hex label="Boolean"><circle cx="16" cy="15" r="7.500" fill="#fff" /><path d="M12 17A5 5 0 0 1 19 10Z" fill="#111" /></Hex>
          <Hex label="Integer"><text x="16" y="23" textAnchor="middle" fontSize="22" fontWeight="700" fill="#fff">7</text></Hex>
        </Col>
        <Col>
          <Hex label="Number"><text x="16" y="22" textAnchor="middle" fontSize="20" fontWeight="700" fill="#fff" fontFamily="Liberation Serif, serif">0.1</text></Hex>
          <Hex label="Text"><text x="16" y="23" textAnchor="middle" fontSize="24" fontWeight="700" fill="#fff" fontFamily="Liberation Serif, serif">A</text></Hex>
        </Col>
      </RibbonGroup>
      <RibbonGroup title="Input">
        <Col>
          <Plate label="Number slider"><path d="M16 8V15" stroke="#000" strokeWidth="3" /><path d="M10 14H22L16 22Z" fill="#000" /><path d="M5 26V29M8 26V29M11 26V29M14 26V29M17 26V29M20 26V29M23 26V29M26 26V29" stroke="#222" /><path d="M5 24H27" stroke="#222" strokeWidth="2" /></Plate>
          <Plate label="Graph" fill="#ffc821"><path d="M5 22Q7 27 9 22Q10 17 12 20Q13 27 15 19Q17 11 18 14Q17 24 20 22Q22 14 24 8Q26 5 25 12Q24 22 27 22" stroke="#a86b00" strokeWidth="2.4" /></Plate>
        </Col>
        <Sep />
        <Col>
          <Plate label="Toggle"><rect x="9" y="4" width="14" height="24" fill="#1c1c1c" stroke="#000" /><rect x="11" y="5" width="10" height="10" fill="url(#gGray)" /></Plate>
          <Free label="Dial"><circle cx="16" cy="16" r="15" fill="#9a9a9a" stroke="#555" /><circle cx="16" cy="16" r="10" fill="#2c2c2c" stroke="#111" strokeWidth="2" /><path d="M24 11L31 16L24 21Z" fill="#111" /></Free>
        </Col>
        <Col>
          <Plate label="Panel"><path d="M10 7Q14 11 21 7M17 4L18 11M22 16H14L13 20Q21 19 21 24Q20 28 15 28" stroke="#3e3e3e" strokeWidth="2.6" /></Plate>
          <Plate label="Value list">{[6, 14, 22].map((y) => <rect key={y} x="5" y={y} width="22" height="4" fill="#eee" stroke="#222" />)}</Plate>
        </Col>
        <Sep />
        <Col>
          <Plate label="Gradient" fill="url(#gPink)"><path d="M2 20H30" stroke="#7c0040" strokeWidth="1.6" /><circle cx="3" cy="20" r="2" fill="#fff" stroke="#222" /><circle cx="22" cy="20" r="2.500" fill="#fff" stroke="#7c0040" /></Plate>
          <Plate label="Colour swatch" fill="#36c22c"><path d="M2 2H10V12H2ZM18 8H24V17H18Z" fill="#c8f58a" /><path d="M10 2H18V8H10ZM2 17H10V24H2Z" fill="#7ee22e" /><path d="M10 10H18V18H10ZM18 20H26V30H18ZM4 24H11V30H4Z" fill="#0f7c10" /><path d="M24 18H30V30H24Z" fill="#40d9a0" /></Plate>
        </Col>
      </RibbonGroup>
      <RibbonGroup title="Rhino">
        <Col>
          <Hex label="Layer"><path d="M7 17L16 25L26 15V19L16 28L8 21Z" fill="#6f9ccd" /><path d="M6 8L16 15L26 9L24 16L15 22L8 16Z" fill="#e8502c" /><path d="M6 8L16 15L26 9L18 11Z" fill="#f8b39c" /></Hex>
          <Hex label="Spiral"><path d="M16 15Q18 13 19 16Q18 20 14 19Q10 16 13 11Q19 7 23 13Q25 20 18 23Q10 25 7 18" stroke="#d98a1c" strokeWidth="2" /></Hex>
        </Col>
        <Sep />
        <Col>
          <Hex label="Hatch" fill="#2a1c06"><path d="M5 10L20 27M8 5L26 24M15 3L29 18M27 10L12 27M24 5L6 24M17 3L3 18" stroke="#c8922c" strokeWidth="2" /></Hex>
          <Hex label="Linetype"><path d="M9 7H23M11 24H22" stroke="#eee" strokeWidth="2" strokeDasharray="4 1" /><path d="M6 11H26" stroke="#eee" strokeWidth="1.6" /><path d="M5 20H27" stroke="#eee" strokeWidth="2" strokeDasharray="3 1" /><path d="M4 15.500H28" stroke="#d9b04a" strokeDasharray="2 1" strokeWidth="1.5" /></Hex>
        </Col>
      </RibbonGroup>
      <RibbonGroup title="Util">
        <Col>
          <Free label="Cherries"><path d="M9 20Q14 12 19 5Q24 14 23 23" stroke="#4b2f1a" strokeWidth="1.4" /><path d="M7 9Q10 1 21 3Q17 13 7 9Z" fill="#4ba52c" /><circle cx="8" cy="22" r="6" fill="url(#gRed)" /><circle cx="22" cy="25" r="6" fill="url(#gRed)" /><circle cx="6" cy="20" r="1.500" fill="#fff" /></Free>
          <Plate label="Data tree"><path d="M16 29V16M16 20L9 13M16 19L23 12M16 16L13 8M16 16L20 8" stroke="#111" strokeWidth="2" /><g fill="#222"><circle cx="8" cy="11" r="3" /><circle cx="12" cy="7" r="3" /><circle cx="19" cy="7" r="3.500" /><circle cx="25" cy="11" r="3" /><circle cx="16" cy="11" r="2" /></g><path d="M2 29H30" stroke="#000" strokeWidth="3" /></Plate>
        </Col>
        <Sep />
        <Col>
          <Free label="Data input"><path d="M2 11H16V5L29 16L16 27V21H2Z" fill="#454545" stroke="#222" /><path d="M4 15H22" stroke="#aaa" /></Free>
          <Free label="Data output"><path d="M2 11H16V5L29 16L16 27V21H2Z" fill="#e8e8e8" stroke="#666" strokeWidth="1.4" /></Free>
        </Col>
        <Sep />
        <Col>
          <Free label="Cluster"><circle cx="12" cy="12" r="10" fill="#c4c8cc" stroke="#666" /><path d="M12 2A10 10 0 0 0 6 20L12 12Z" fill="#8e9296" /><circle cx="12" cy="11" r="3.500" fill="#777" stroke="#fff" /><circle cx="21" cy="21" r="9" fill="#d05a92" stroke="#666" /><circle cx="21" cy="21" r="3.500" fill="#f4d7e5" /></Free>
          <Free label="Flask"><path d="M12 3V12L5 26Q5 29 9 29H22Q26 29 25 26L19 12V3Z" fill="#f6e3ec" stroke="#85345c" /><path d="M9 18H22L26 27Q24 29 20 29H9Q5 29 5 26Z" fill="url(#gPink)" /><path d="M10 3H21" stroke="#555" strokeWidth="1.6" /></Free>
        </Col>
      </RibbonGroup>
    </div>
  );
}

function CategoryTabs() {
  const icons: [string, ReactNode][] = [
    ["Maths", <text key="t" x="10" y="17" textAnchor="middle" fontSize="19" fontWeight="700" fill="#4a4a4a" fontFamily="DejaVu Serif, serif">Σ</text>],
    ["Sets", <path key="p" d="M10 19V9M4 18H16M10 11C4 12 1 7 1 1C8 3 10 6 10 11ZM10 11C11 5 14 3 19 2C19 8 16 11 10 11Z" fill="#4a4a4a" stroke="#4a4a4a" />],
    ["Vector", <path key="p" d="M2 17L10 8L8 5L18 2L16 12L13 10L4 19Z" fill="#4a4a4a" />],
    ["Curve", <path key="p" d="M2 8C1 1 12 0 13 4C14 8 4 9 4 14C4 19 18 20 18 12C18 9 14 8 12 10" fill="none" stroke="#4a4a4a" strokeWidth="2.2" />],
    ["Surface", <path key="p" d="M8 1Q17 2 19 11L7 19Q9 12 0 12Q6 8 8 1Z" fill="#4a4a4a" />],
    ["Mesh", <path key="p" d="M0 6L19 1L13 19Q9 9 0 6Z" fill="#4a4a4a" />],
    ["Intersect", <g key="g" stroke="#4a4a4a" fill="#4a4a4a"><path d="M3 4L17 17M2 18L17 3" strokeWidth="1.6" fill="none" /><circle cx="3" cy="17" r="1.500" /><circle cx="17" cy="3" r="1.500" /><circle cx="3" cy="4" r="1" /><circle cx="17" cy="17" r="1" /></g>],
    ["Transform", <g key="g"><path d="M3 18C16 21 18 12 10 11C1 10 3 2 11 4M5 14C7 12 10 12 12 14" fill="none" stroke="#4a4a4a" strokeWidth="2.4" /><path d="M10 0L19 5L12 9Z" fill="#4a4a4a" /></g>],
    ["Display", <g key="g"><path d="M0 10Q10 0 20 10Q10 19 0 10Z" fill="none" stroke="#555" strokeWidth="1.6" /><circle cx="10" cy="10" r="4.500" fill="#333" /></g>],
    ["Rhino", <path key="p" d="M0 4L5 7L7 2L10 9L15 12L20 10L16 17L11 15L8 12L3 12Z" fill="#4a4a4a" />],
    ["Kangaroo", <text key="t" x="10" y="17" textAnchor="middle" fontSize="19" fontWeight="700" fill="#333" stroke="#333" strokeWidth=".8" fontFamily="DejaVu Sans, sans-serif">K</text>],
  ];
  return (
    <div className="flex h-[31px] bg-[#f0f0f0]">
      <button aria-label="Params" className="flex w-[37px] items-center justify-center rounded-t-lg bg-white">
        <svg viewBox="0 0 20 20" className="size-5"><path d="M5 2H15L20 10L15 18H5L0 10Z" fill="#454545" /></svg>
      </button>
      <div className="flex">
        {icons.map(([name, node]) => (
          <button key={name} aria-label={name} className="flex w-[37px] items-center justify-center">
            <svg viewBox="0 0 20 20" className="size-5">{node}</svg>
          </button>
        ))}
      </div>
    </div>
  );
}

const Caret = () => <svg viewBox="0 0 8 5" className="h-1 w-1.5 shrink-0"><path d="M0 0H8L4 5Z" fill="#111" /></svg>;

function CanvasButton({ label, on, children }: { label: string; on?: boolean; children: ReactNode }) {
  return (
    <button aria-label={label} className={on ? "flex h-9 w-[35px] items-center justify-center border border-[#6db1e0] bg-[#f4faff]" : "flex h-9 w-[35px] items-center justify-center"}>
      <svg viewBox="0 0 30 30" className="size-[30px]" fill="none">{children}</svg>
    </button>
  );
}

function CanvasToolbar() {
  return (
    <div className="flex h-[39px] items-center border-t border-[#777] bg-linear-to-r from-[#fdfdfd] to-[#f6f4f4] pr-1.5">
      <CanvasButton label="Open file"><path d="M5 2H13L16 5H24V14H5Z" fill="#f4f4f4" stroke="#666" /><path d="M2 13H11L14 10H26V29H2Z" fill="url(#gGreen)" stroke="#2b7a12" /></CanvasButton>
      <CanvasButton label="Save file"><path d="M1 1H29V29H4L1 26Z" fill="#1f63d6" stroke="#0c2d7a" /><rect x="6" y="2" width="18" height="12" fill="#eef3fa" /><path d="M8 6H22M8 10H22" stroke="#b5c4dc" /><rect x="8" y="18" width="14" height="11" fill="#b8c6dc" /><rect x="11" y="21" width="4" height="7" fill="#173e98" /></CanvasButton>
      <div className="relative mr-1 ml-2">
        <select aria-label="Zoom" className="h-[26px] w-[193px] appearance-none border border-[#a9a9a9] bg-white pl-px text-[15px] text-[#222]">
          <option>48%</option>
        </select>
        <svg viewBox="0 0 10 6" className="pointer-events-none absolute top-[11px] right-1.5 h-1.5 w-2.5"><path d="M1 1L5 5L9 1" fill="none" stroke="#777" /></svg>
      </div>
      <CanvasButton label="Zoom extents"><path d="M2 11V2H11M19 2H28V11M28 19V28H19M11 28H2V19" stroke="#111" strokeWidth="5" /><path d="M12 12L18 18M18 12L12 18" stroke="#111" strokeWidth="2.500" /></CanvasButton>
      <span className="w-1" />
      <Caret />
      <span className="w-[5px]" />
      <CanvasButton label="Preview"><path d="M1 15Q15 -2 29 15Q15 31 1 15Z" fill="#fff" stroke="#1c2a35" strokeWidth="1.6" /><circle cx="15" cy="15" r="8" fill="#45a8d2" stroke="#0e4a66" /><circle cx="15" cy="15" r="3.500" fill="#0a1a22" /><circle cx="17" cy="12" r="2" fill="#fff" /></CanvasButton>
      <span className="w-1.5" />
      <Caret />
      <span className="w-0.5" />
      <CanvasButton label="Sketch"><path d="M4 5Q-1 6 2 14Q8 20 3 23Q2 28 9 27Q14 26 17 21" stroke="#333" strokeWidth="1.4" /><path d="M10 18L23 3Q28 1 29 6L28 15L16 27L9 28Z" fill="url(#gRed)" /><path d="M10 18L15 20L16 27L7 29Z" fill="#e9b98c" stroke="#633" strokeWidth=".6" /></CanvasButton>
      <div className="ml-auto flex items-center">
        <CanvasButton label="No preview"><path d="M3 20L15 15L27 20V24L17 29L4 25Z" fill="#2e2e2e" stroke="#111" /><path d="M5 7L13 1L22 2L26 10L24 14L16 19L8 18L4 12Z" fill="#d0d0d0" stroke="#666" /><ellipse cx="17" cy="7" rx="6" ry="4" transform="rotate(25 17 7)" fill="#f5f5f5" stroke="#888" /></CanvasButton>
        <CanvasButton label="Wire preview"><path d="M2 18Q0 12 5 8L14 2Q20 0 27 7Q31 12 28 17L17 27Q11 31 4 25Z" fill="#f6f6f6" stroke="#333" strokeWidth="1.6" /><ellipse cx="20" cy="9" rx="7" ry="5.500" transform="rotate(40 20 9)" stroke="#444" /><ellipse cx="10" cy="20" rx="7" ry="5" transform="rotate(40 10 20)" stroke="#444" /></CanvasButton>
        <CanvasButton label="Shaded preview" on><path d="M2 18Q0 12 5 8L14 2Q20 0 27 7Q31 12 28 17L17 27Q11 31 4 25Z" fill="url(#gRed)" stroke="#610606" /><ellipse cx="19" cy="9" rx="7" ry="4.500" transform="rotate(40 19 9)" fill="#c31a1a" stroke="#700" /></CanvasButton>
        <span className="mr-1.5 ml-1 h-8 w-px bg-[#d5d5d5]" />
        <CanvasButton label="Selected only"><path d="M6 6Q10 1 22 3Q29 9 27 15L20 26Q14 28 9 22Q12 16 6 6Z" fill="url(#gTeal)" stroke="#0a4a4a" /><ellipse cx="20" cy="8" rx="6" ry="4" fill="#0e8482" stroke="#075" transform="rotate(25 20 8)" /><path d="M1 4L9 8M14 26L24 29" stroke="#222" strokeWidth="1.4" /></CanvasButton>
        <CanvasButton label="Clipping"><path d="M2 17Q2 12 6 8L25 24L17 28Q9 30 4 24Z" fill="#e8e8e8" stroke="#555" /><path d="M6 8L14 2Q20 0 27 6Q31 12 28 18L24 23Z" fill="url(#gGreen)" stroke="#275e0e" /><ellipse cx="20" cy="9" rx="6" ry="4" transform="rotate(40 20 9)" fill="#5fa832" stroke="#275e0e" /><path d="M2 4L26 27" stroke="#111" strokeWidth="1.8" /></CanvasButton>
        <CanvasButton label="Mesh edges"><circle cx="15" cy="15" r="13" fill="#e9e9e9" stroke="#555" strokeWidth="1.4" /><path d="M15 2A13 13 0 0 0 15 28Z" fill="url(#gOrange)" /></CanvasButton>
        <span className="ml-0.5 h-8 w-px bg-[#d5d5d5]" />
        <CanvasButton label="Mesh quality"><path d="M9 5L15 3L22 5L27 14L24 22L15 27L7 23L3 16L5 8Z" fill="#7caeea" stroke="#264a86" strokeWidth="1.6" /><path d="M9 6L15 4L21 6L25 14L15 12L5 14Z" fill="#b6d5fa" /></CanvasButton>
        <Caret />
      </div>
    </div>
  );
}

/* ---------- Grasshopper canvas ---------- */

const NODES: NodeSpec[] = [
  { x: 1456, y: 483, w: 50, h: 22, bar: 12, tone: "light" },
  { x: 1529, y: 500, w: 41, h: 22, bar: 15, tone: "light" },
  { x: 1609, y: 527, w: 33, h: 27, bar: 9, tone: "light" },
  { x: 1387, y: 543, w: 46, h: 15, bar: 19, tone: "light" },
  { x: 1490, y: 551, w: 36, h: 47, bar: 15 },
  { x: 1434, y: 589, w: 43, h: 20, bar: 18 },
  { x: 1533, y: 604, w: 49, h: 42, bar: 24 },
  { x: 1637, y: 573, w: 41, h: 39, bar: 15 },
  { x: 1743, y: 567, w: 45, h: 21, bar: 18, tone: "green" },
  { x: 1678, y: 625, w: 43, h: 17, bar: 13 },
  { x: 1742, y: 624, w: 29, h: 33, bar: 6, tone: "light" },
  { x: 1400, y: 652, w: 38, h: 44, bar: 16, tone: "light" },
  { x: 1466, y: 656, w: 38, h: 43, bar: 13, tone: "light" },
  { x: 1386, y: 738, w: 32, h: 28, bar: 9, tone: "light" },
  { x: 1258, y: 752, w: 26, h: 25, bar: 8, tone: "light" },
];

// x, y, width, height of the small components
const DIM: [number, number, number, number][] = [
  [1438, 744, 20, 9], [1468, 741, 21, 14], [1499, 731, 20, 13], [1110, 710, 25, 15], [1163, 695, 22, 22], [1164, 717, 22, 22],
  [1163, 740, 21, 21], [1194, 710, 22, 21], [1223, 732, 22, 16], [1092, 756, 21, 15], [1094, 776, 21, 14], [970, 792, 20, 13],
  [996, 793, 20, 26], [1021, 786, 21, 14], [1140, 817, 21, 16], [1170, 824, 24, 21], [1201, 839, 21, 18], [1228, 826, 19, 14],
  [1487, 762, 22, 21], [1589, 767, 22, 21], [1459, 783, 22, 21], [1521, 786, 20, 12], [1551, 781, 27, 22], [1421, 802, 23, 21],
  [1497, 820, 26, 15], [1529, 811, 21, 21], [1589, 824, 22, 15], [1558, 837, 22, 15], [1463, 838, 22, 15], [1659, 806, 21, 14],
  [1691, 809, 21, 15], [1706, 829, 21, 14], [1740, 788, 21, 15], [1739, 817, 20, 14], [1739, 835, 20, 12], [1782, 804, 20, 14],
  [1782, 827, 21, 21], [1808, 813, 27, 22], [1848, 802, 26, 21], [1849, 830, 22, 14], [1889, 756, 22, 27], [1890, 792, 21, 14],
];

const SLIDERS: [number, number, number, number][] = [
  [1364, 602, 65, 27], [1432, 617, 65, 27], [1466, 627, 65, 27], [1037, 720, 62, 24], [1242, 703, 65, 26],
  [1592, 869, 51, 7], [1666, 873, 52, 7], [1774, 875, 51, 7],
];

const PANELS: [number, number][] = [[1594, 482], [1533, 533], [1540, 569]];

const WIRES: [number, number, number, number][] = [
  [1506, 494, 1529, 506], [1433, 553, 1529, 517], [1570, 512, 1594, 498], [1570, 512, 1609, 540],
  [1570, 512, 1637, 579], [1526, 586, 1540, 584], [1477, 599, 1540, 597], [1591, 593, 1637, 592], [1582, 625, 1637, 605],
  [1497, 621, 1533, 615], [1721, 634, 1742, 632], [1721, 640, 1742, 648], [1438, 674, 1466, 678],
  [1307, 707, 1400, 674], [1200, 709, 1400, 687],
  [1353, 758, 1386, 752], [1353, 758, 1386, 756], [1418, 750, 1438, 747], [1458, 747, 1468, 745], [1458, 750, 1468, 750], [1489, 748, 1499, 738],
  [1519, 737, 1889, 760], [1353, 758, 1421, 812], [1342, 820, 1459, 788], [1342, 820, 1463, 843], [1444, 806, 1459, 794],
  [1444, 806, 1889, 772], [1481, 789, 1487, 773], [1509, 768, 1589, 771], [1481, 789, 1551, 789], [1541, 790, 1551, 790], [1541, 794, 1551, 794],
  [1578, 791, 1589, 777], [1611, 773, 1889, 779], [1578, 791, 1740, 793], [1761, 796, 1890, 796], [1485, 846, 1497, 824],
  [1485, 846, 1558, 847], [1523, 824, 1529, 815], [1550, 821, 1659, 816], [1550, 821, 1589, 835], [1550, 822, 1558, 840],
  [1580, 844, 1589, 830], [1611, 832, 1620, 839], [1652, 838, 1659, 811], [1680, 813, 1691, 813], [1643, 872, 1691, 820],
  [1712, 816, 1782, 815], [1712, 816, 1739, 821], [1712, 816, 1739, 838], [1727, 835, 1739, 828], [1727, 835, 1740, 799],
  [1718, 877, 1706, 839], [1759, 825, 1782, 809], [1759, 841, 1782, 843], [1802, 809, 1808, 818], [1803, 837, 1808, 829],
  [1835, 824, 1848, 819], [1835, 824, 1849, 834], [1825, 878, 1849, 841], [1874, 808, 1890, 802], [1911, 762, 1918, 767],
  [1871, 837, 1889, 766],
  [1099, 724, 1110, 713], [1099, 724, 1110, 720], [1135, 717, 1163, 700], [1135, 717, 1164, 721], [1137, 738, 1164, 728],
  [1137, 738, 1163, 706], [1137, 738, 1163, 751], [1185, 706, 1194, 714], [1186, 727, 1194, 721], [1184, 744, 1223, 737],
  [1216, 720, 1223, 743], [1245, 738, 1258, 762], [1113, 763, 1163, 744], [1113, 764, 1258, 757], [1284, 770, 1338, 758],
  [963, 757, 1092, 761], [963, 778, 1164, 720], [963, 786, 1092, 768], [963, 777, 1094, 780], [963, 786, 1021, 789],
  [963, 762, 1332, 820], [990, 799, 996, 810], [1016, 812, 1021, 795], [1042, 794, 1054, 802], [1086, 803, 1094, 787],
  [1115, 783, 1140, 828], [963, 822, 1140, 822], [990, 799, 1170, 839], [1161, 823, 1170, 830], [1194, 828, 1228, 830],
  [1194, 841, 1201, 844], [1222, 843, 1228, 837], [963, 800, 970, 796],
];

function wire([x1, y1, x2, y2]: [number, number, number, number]) {
  const c = Math.max(6, Math.abs(x2 - x1) * 0.42);
  return `M${x1} ${y1}C${x1 + c} ${y1} ${x2 - c} ${y2} ${x2} ${y2}`;
}

const TONES = { light: "url(#gLight)", dim: "url(#gDim)", green: "#7ee61f", solid: "url(#gPurple)" };

function Component({ x, y, w, h, bar, barW = 8, tone }: NodeSpec) {
  return (
    <g>
      <rect x={x} y={y} width={w} height={h} rx="1" fill={TONES[tone ?? "solid"]} stroke="#4c4a50" strokeWidth="1.2" />
      <rect x={x + bar} y={y + 0.5} width={barW} height={h - 1} rx="1" fill={tone === "green" ? "#0f4a08" : "#343434"} stroke="#161616" strokeWidth=".8" />
    </g>
  );
}

function Canvas() {
  return (
    <div className="relative min-h-0 flex-1 bg-[#d3cfc6]">
      <svg viewBox="962 264 955 721" preserveAspectRatio="xMinYMin slice" className="absolute inset-0 h-full w-full" fill="none">
        <rect x="960" y="264" width="1600" height="388" fill="#cfcbc3" />
        <path d="M960 651.500H2600" stroke="#555" strokeWidth="1.4" />
        <rect x="960" y="692" width="328" height="168" fill="#b9a3e6" stroke="#ab98d2" />
        <g stroke="#45404a" strokeWidth="1" strokeOpacity=".75">
          <path d={WIRES.map(wire).join("")} />
          <path d="M1387 550C1340 551 1330 580 1345 605C1365 650 1403 700 1403 738" />
          <path d="M1400 660C1365 662 1372 690 1375 700C1386 745 1388 758 1353 758" />
          <path d="M1433 553C1465 553 1425 495 1456 494" />
          <path d="M1678 583C1705 583 1708 610 1713 625" />
          <path d="M1247 833C1285 833 1228 775 1258 772" />
          <path d="M1434 599C1410 592 1430 585 1490 562M1490 575C1478 575 1490 598 1477 599M1512 551L1533 543M1526 562Q1533 550 1533 548M1554 532Q1580 522 1584 510" />
        </g>
        <path d="M1448 741C1500 720 1540 670 1567 650" stroke="#9a958c" strokeOpacity=".6" />
        <path d="M1678 579C1710 575 1720 572 1743 573M1743 583C1725 590 1745 600 1765 617C1785 635 1780 640 1771 640" stroke="#93a86e" strokeOpacity=".6" />
        {NODES.map((n) => (
          <Component key={`${n.x}-${n.y}`} {...n} />
        ))}
        {DIM.map(([x, y, w, h]) => (
          <Component key={`${x}-${y}`} x={x} y={y} w={w} h={h} bar={Math.round(w / 2) - 4} barW={9} tone="dim" />
        ))}
        {PANELS.map(([x, y]) => (
          <g key={`${x}-${y}`}>
            <rect x={x} y={y} width="51" height="31" fill="#fff957" stroke="#57541c" strokeWidth="1.2" />
            <rect x={x} y={y} width="51" height="6" fill="#cdc640" stroke="#57541c" strokeWidth=".8" />
            <text x={x + 25} y={y + 4} textAnchor="middle" fontSize="4" fill="#333">Panel</text>
          </g>
        ))}
        <rect x="1588" y="865" width="57" height="14" fill="#b4a4dc" stroke="#9685cc" />
        {SLIDERS.map(([x, y, w, s]) => (
          <g key={`${x}-${y}`}>
            <rect x={x} y={y} width={w} height="7" rx="1" fill="#e0dce0" stroke="#57545c" />
            <rect x={x} y={y} width={s} height="7" rx="1" fill="#9998ac" stroke="#57545c" />
          </g>
        ))}
        <rect x="1120" y="734" width="17" height="7" rx="1" fill="#a5a4b2" stroke="#4c4a50" />
        <rect x="1338" y="755" width="15" height="7" rx="1" fill="#a5a4b2" stroke="#4c4a50" />
        <rect x="1332" y="818" width="10" height="5" rx="1" fill="#a5a4b2" stroke="#222" />
        <rect x="1055" y="788" width="30" height="28" fill="#e2e2e2" stroke="#5d5868" strokeWidth="3" />
        <path d="M1057 791L1075 802M1057 791C1068 797 1065 814 1083 815" stroke="#333" />
        <circle cx="1075" cy="801" r="1.5" fill="#333" />
        <rect x="1621" y="824" width="30" height="29" fill="#e2e2e2" stroke="#5d5868" strokeWidth="3" />
        <path d="M1623 852Q1648 852 1649 826" stroke="#333" />
        <path d="M1652 830V846" stroke="#b23a3a" />
        <path d="M1172 936A29 29 0 0 1 1226 943" stroke="#000" strokeWidth="5" />
        <path d="M1163 922L1175 923L1179 928L1168 932Z" fill="#000" />
        <circle cx="1198" cy="946" r="26" fill="url(#gKnob)" stroke="#333" />
        <circle cx="1198" cy="946" r="25" stroke="#fff" strokeWidth="2" />
        <path d="M1176 933L1180 926L1184 933ZM1208 922L1217 927L1209 931ZM1222 955L1218 963L1212 956ZM1182 961L1188 960L1188 969Z" fill="#fff" />
      </svg>
      <button aria-label="Slider shortcut" className="absolute bottom-0 left-0 flex h-[37px] w-[46px] items-center border border-[#555] bg-linear-to-r from-[#8a8a8a] to-[#b8b8b8] pl-0.5">
        <svg viewBox="0 0 32 32" className="size-8" fill="none">
          <rect x="1" y="1" width="30" height="30" rx="3" fill="url(#gPlate)" stroke="#222" />
          <path d="M16 8V15" stroke="#000" strokeWidth="4" />
          <path d="M11 14H21L16 21Z" fill="#000" />
          <path d="M5 24H27" stroke="#111" strokeWidth="2" />
          <path d="M6 28H26" stroke="#111" strokeWidth="3" strokeDasharray="1 2" />
        </svg>
      </button>
    </div>
  );
}

function GrasshopperWindow() {
  return (
    <section className="flex min-w-0 flex-1 flex-col border-t-2 border-r-2 border-l-2 border-[#6b6b6b] bg-[#f0f0f0] text-[15px] text-[#1c1c1c]">
      <header className="flex h-[36px] items-center bg-[#eef3f9] pl-2">
        <h1>Grasshopper - shatter_glass[1]*</h1>
        <WindowButtons />
      </header>
      <nav className="flex h-[37px] items-center gap-[22px] bg-linear-to-r from-[#f0f0f0] to-[#fcfcfc] pt-px pr-3 pl-4">
        {["File", "Edit", "View", "Display", "Solution", "Help"].map((m) => (
          <button key={m}>{m}</button>
        ))}
        <span className="ml-auto">shatter_glass[1]</span>
      </nav>
      <CategoryTabs />
      <Ribbon />
      <CanvasToolbar />
      <Canvas />
      <footer className="flex h-[30px] items-center gap-1 bg-[#f0eeee] pt-0.5 pr-11 pl-0.5">
        <svg viewBox="0 0 22 22" className="size-[22px]">
          <circle cx="11" cy="11" r="10" fill="#1d69b8" stroke="#123" />
          <path d="M11 5V12M11 15V17" stroke="#fff" strokeWidth="3" strokeLinecap="round" />
        </svg>
        <span>Autosave complete (17 seconds ago)</span>
        <span className="ml-auto text-[#8a8a8a]">1.0.0008</span>
      </footer>
    </section>
  );
}

export default function App() {
  return (
    <div className="min-h-screen bg-white font-['Noto_Sans','Open_Sans',sans-serif]">
      <SharedDefs />
      <main className="flex h-[calc(100vh-56px)] flex-col">
        <div className="flex min-h-0 flex-1 border-b-2 border-[#77756c]">
          <RhinoWindow />
          <GrasshopperWindow />
        </div>
        <div className="h-[7px] bg-[#29271a]" />
      </main>
    </div>
  );
}
